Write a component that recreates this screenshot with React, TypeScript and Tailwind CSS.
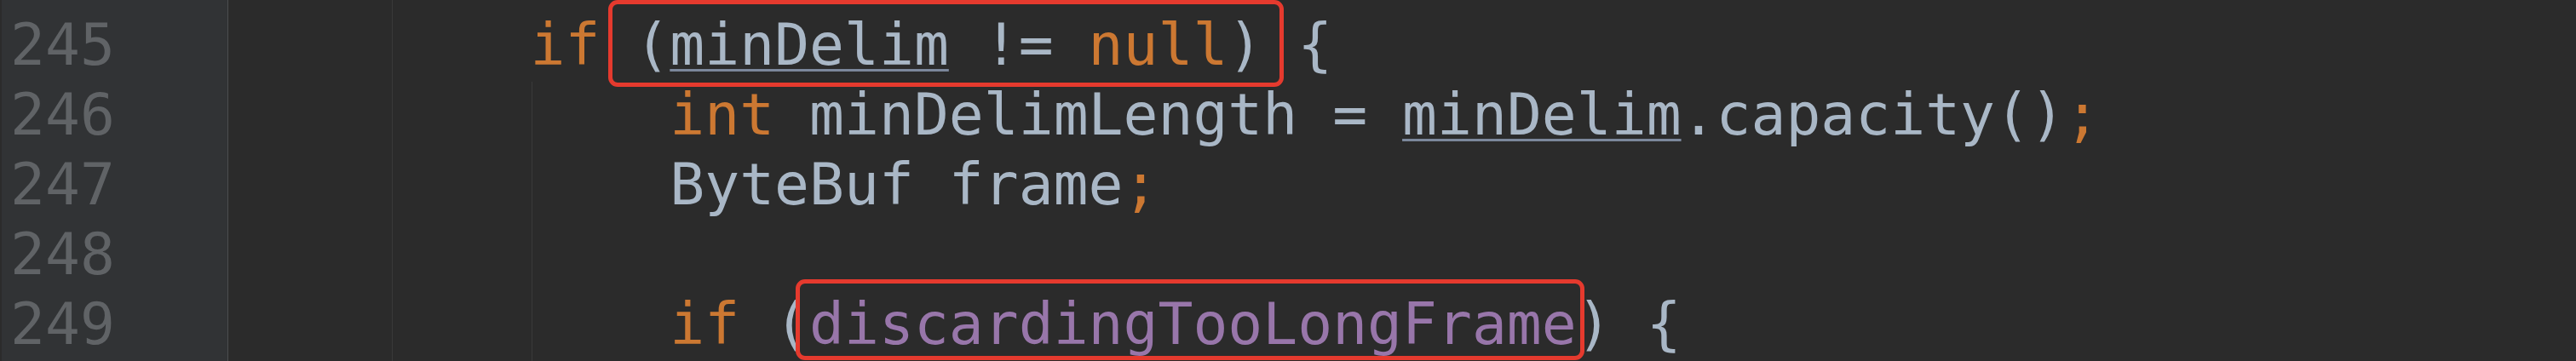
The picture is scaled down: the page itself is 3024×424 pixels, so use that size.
const KW = "text-[#cc7832]";
const ID = "text-[#a9b7c6]";
const FIELD = "text-[#9876aa]";
const UL = "underline decoration-[#7b879b] decoration-[3px] underline-offset-[5px]";

const lineNumbers = [245, 246, 247, 248, 249];

function Line({ children }: { children?: React.ReactNode }) {
  return <div className="h-[82px] leading-[82px] whitespace-pre">{children}</div>;
}

export default function App() {
  return (
    <div
      className="w-[3024px] h-[424px] flex bg-[#2b2b2b] overflow-hidden text-[68px]"
      style={{ fontFamily: "'DejaVu Sans Mono', 'Liberation Mono', monospace" }}
    >
      {/* Gutter */}
      <div className="w-[267px] shrink-0 bg-[#313335] border-l-2 border-[#2b2b2b] pt-[12px] pl-[10px] text-[#606366]">
        {lineNumbers.map((n) => (
          <div key={n} className="h-[82px] leading-[82px]">
            {n}
          </div>
        ))}
      </div>
      <div className="w-px shrink-0 bg-[#4b4d4f]" />

      {/* Code */}
      <div className="relative flex-1 pt-[12px] pl-[27px] text-[#a9b7c6]">
        {/* indent guides */}
        <div className="absolute left-[192px] top-0 bottom-0 w-px bg-[#3a3a3a]" />
        <div className="absolute left-[356px] top-[96px] bottom-0 w-px bg-[#3a3a3a]" />

        <Line>
          {"        "}
          <span className={KW}>if</span>{" "}
          <span className="relative inline-block">
            (<span className={UL}>minDelim</span> != <span className={KW}>null</span>)
            <span className="absolute left-[-31px] right-[-25px] top-[-12px] bottom-[-8px] border-[5px] border-[#e53a2e] rounded-[11px]" />
          </span>{" "}
          {"{"}
        </Line>
        <Line>
          {"            "}
          <span className={KW}>int</span> <span className={ID}>minDelimLength</span> ={" "}
          <span className={UL}>minDelim</span>.capacity()<span className={KW}>;</span>
        </Line>
        <Line>
          {"            "}ByteBuf frame<span className={KW}>;</span>
        </Line>
        <Line />
        <Line>
          {"            "}
          <span className={KW}>if</span> (
          <span className="relative inline-block">
            <span className={FIELD}>discardingTooLongFrame</span>
            <span className="absolute left-[-16px] right-[-9px] top-[-12px] bottom-[-1px] border-[5px] border-[#e53a2e] rounded-[11px]" />
          </span>
          ) {"{"}
        </Line>
      </div>
    </div>
  );
}
